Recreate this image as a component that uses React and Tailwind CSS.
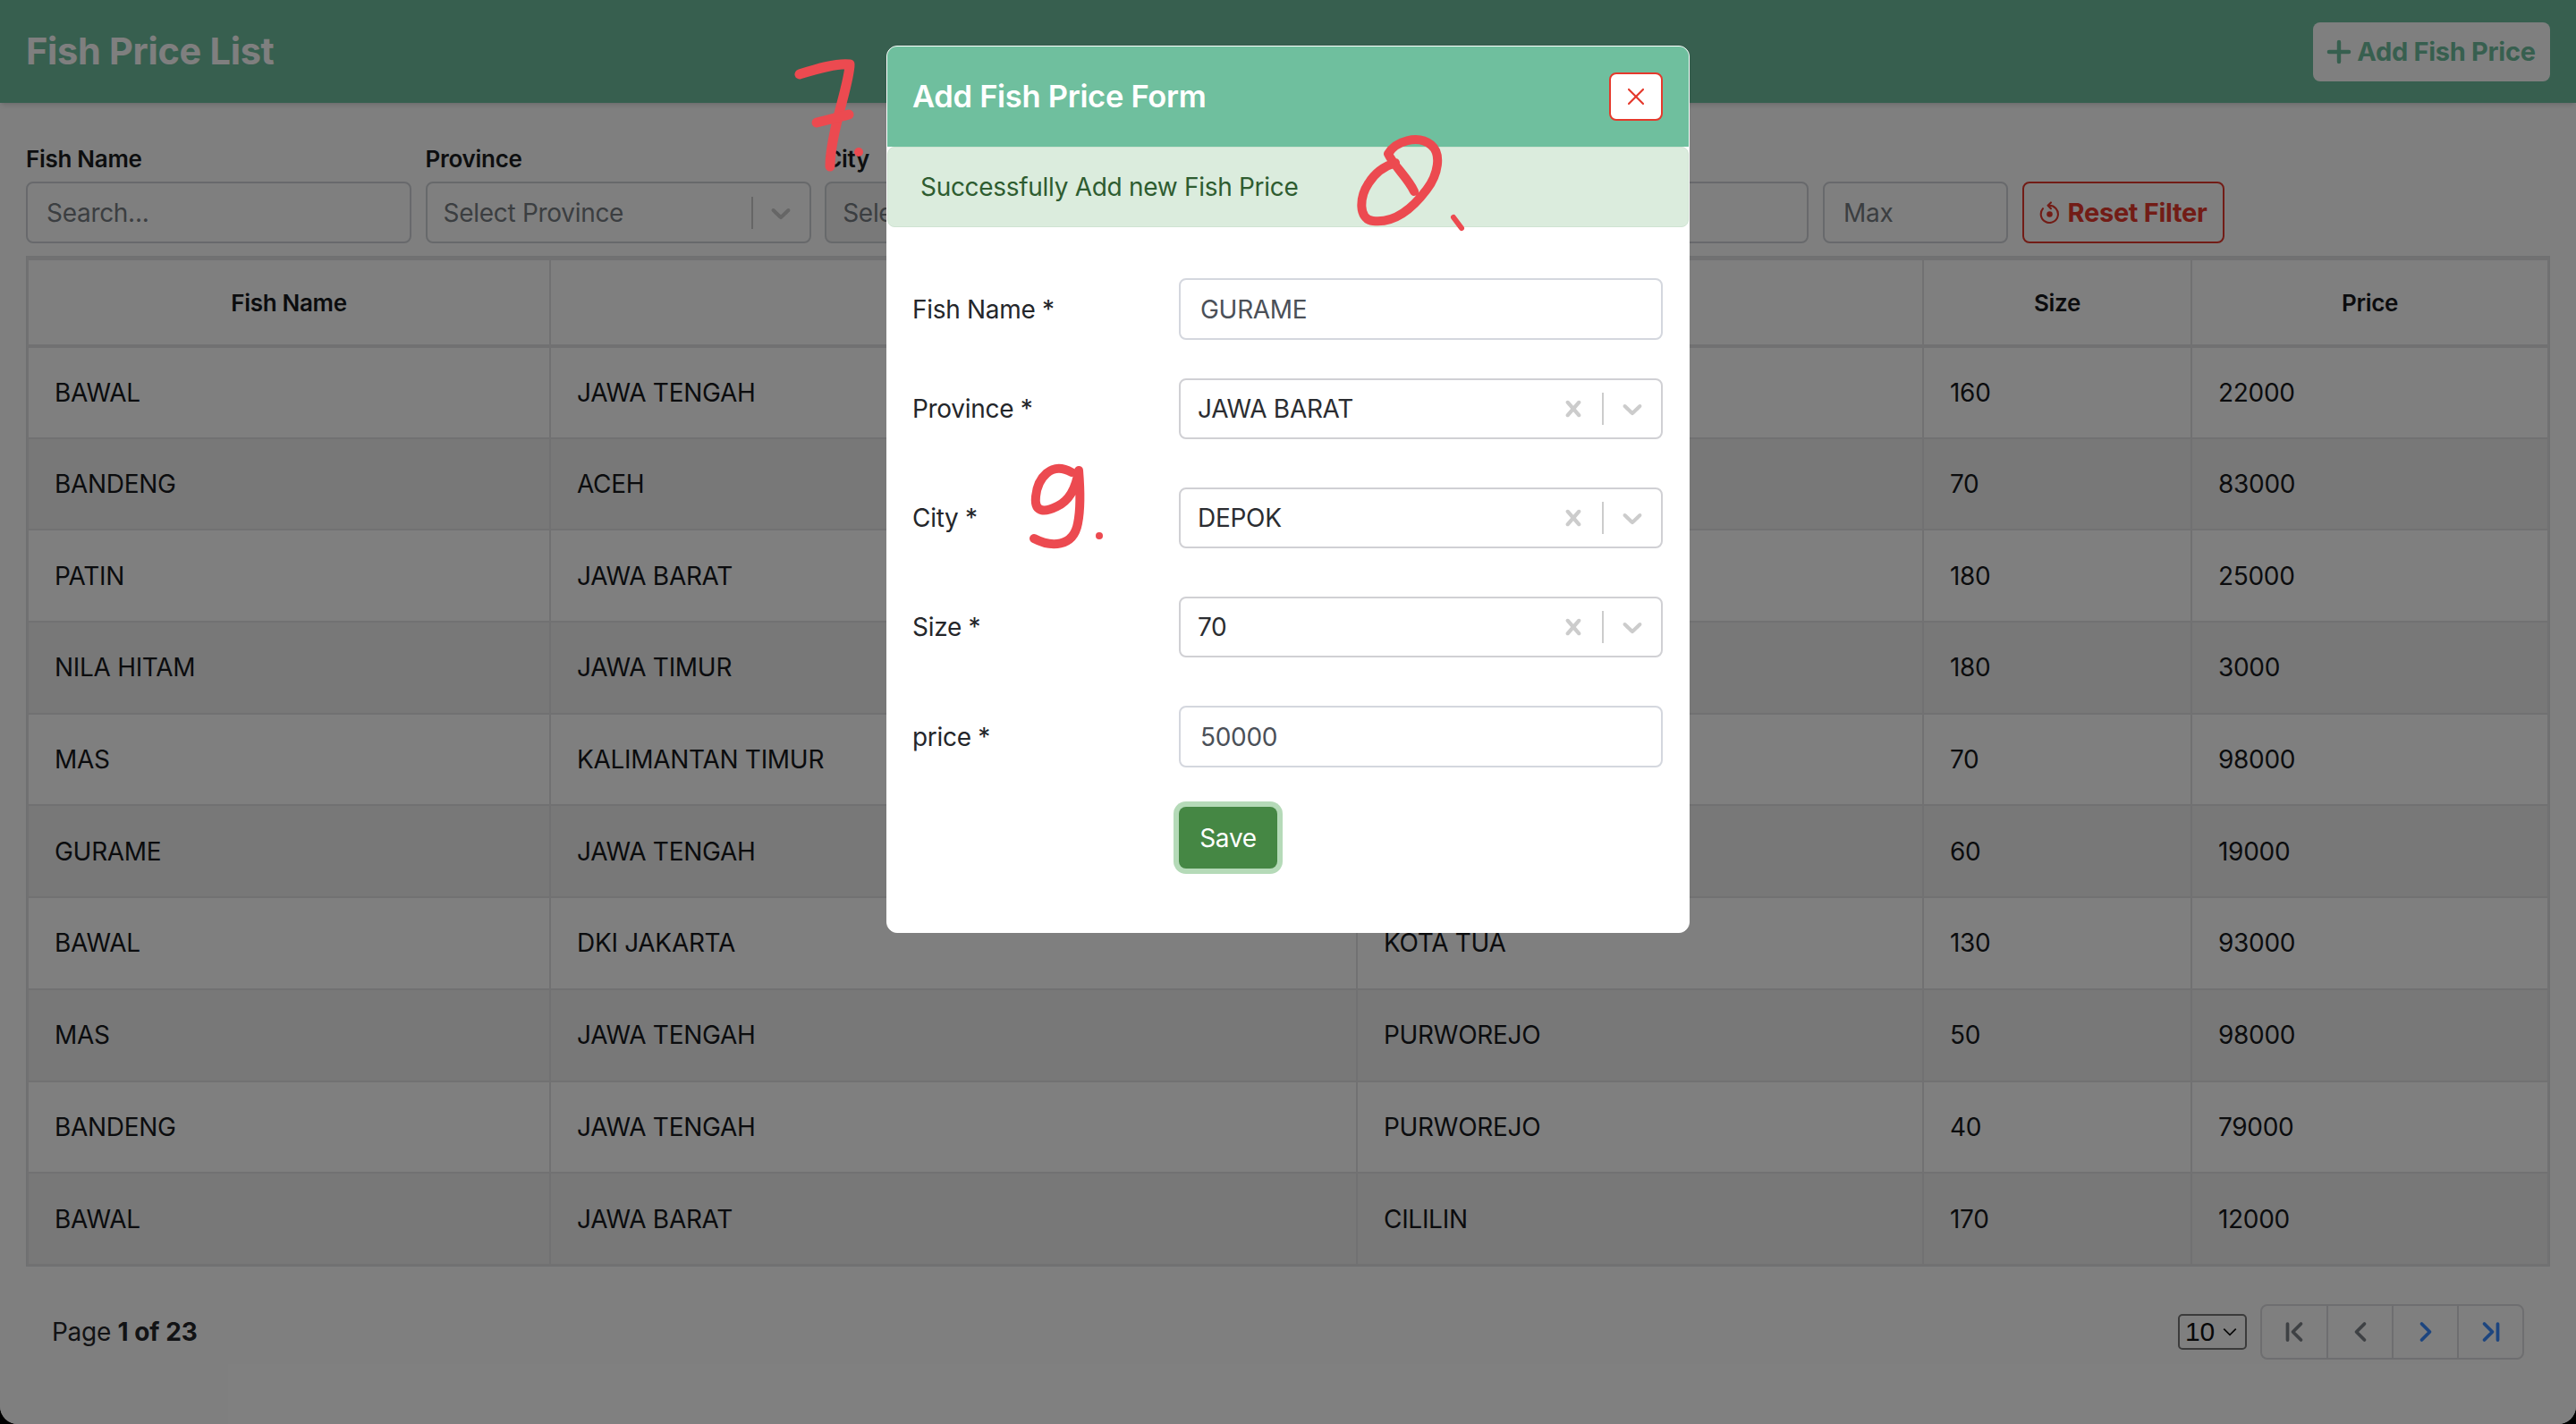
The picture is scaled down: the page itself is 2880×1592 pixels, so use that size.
import React from "react";
import { ChevronFirst, ChevronLast, ChevronLeft, ChevronRight, Plus, X } from "lucide-react";

const rows = [
  ["BAWAL", "JAWA TENGAH", "PURWOREJO", "160", "22000"],
  ["BANDENG", "ACEH", "BANDA ACEH", "70", "83000"],
  ["PATIN", "JAWA BARAT", "CILILIN", "180", "25000"],
  ["NILA HITAM", "JAWA TIMUR", "SURABAYA", "180", "3000"],
  ["MAS", "KALIMANTAN TIMUR", "BALIKPAPAN", "70", "98000"],
  ["GURAME", "JAWA TENGAH", "PURWOREJO", "60", "19000"],
  ["BAWAL", "DKI JAKARTA", "KOTA TUA", "130", "93000"],
  ["MAS", "JAWA TENGAH", "PURWOREJO", "50", "98000"],
  ["BANDENG", "JAWA TENGAH", "PURWOREJO", "40", "79000"],
  ["BAWAL", "JAWA BARAT", "CILILIN", "170", "12000"],
];

const Chevron = ({ className }) => (
  <svg viewBox="0 0 20 20" className={className} fill="currentColor">
    <path d="M4.516 7.548c0.436-0.446 1.043-0.481 1.576 0l3.908 3.747 3.908-3.747c0.533-0.481 1.141-0.446 1.576 0 0.436 0.445 0.408 1.197 0 1.615-0.406 0.418-4.695 4.502-4.695 4.502-0.217 0.223-0.502 0.335-0.789 0.335s-0.572-0.112-0.79-0.335c0 0-4.287-4.084-4.695-4.502s-0.436-1.17 0-1.615z" />
  </svg>
);

const Cross = ({ className }) => (
  <svg viewBox="0 0 20 20" className={className} fill="currentColor">
    <path d="M14.348 14.849c-0.469 0.469-1.229 0.469-1.697 0l-2.651-3.030-2.651 3.029c-0.469 0.469-1.229 0.469-1.697 0-0.469-0.469-0.469-1.229 0-1.697l2.758-3.15-2.759-3.152c-0.469-0.469-0.469-1.228 0-1.697s1.228-0.469 1.697 0l2.652 3.031 2.651-3.031c0.469-0.469 1.228-0.469 1.697 0s0.469 1.229 0 1.697l-2.758 3.152 2.758 3.15c0.469 0.469 0.469 1.229 0 1.698z" />
  </svg>
);

const ResetIcon = ({ className }) => (
  <svg viewBox="0 0 24 26" className={className} fill="none" stroke="currentColor" strokeWidth="2.2" strokeLinecap="round" strokeLinejoin="round">
    <path d="M11 5 A10 10 0 1 1 4.2 8.5" />
    <path d="M13.5 1.5 L10 5 L13.5 8.5" />
    <circle cx="12" cy="15" r="3.4" fill="currentColor" stroke="none" />
  </svg>
);

const FilterField = ({ label, className, children }) => (
  <div className={`flex flex-col ${className}`}>
    <label className="h-[26px] mb-[12px] text-[26px] leading-[26px] font-semibold text-[#1a1d21]">{label}</label>
    {children}
  </div>
);

const FilterSelect = ({ text, disabled }) => (
  <div className={`h-[69px] flex items-center rounded-lg border-2 border-[#cfd2d6] pl-[18px] pr-[14px] ${disabled ? "bg-[#f2f2f2]" : "bg-white"}`}>
    <span className="flex-1 text-[28px] text-[#777c82]">{text}</span>
    <span className="w-[2px] h-[36px] bg-[#cccccc]" />
    <Chevron className="w-[36px] h-[36px] ml-[13px] text-[#cccccc]" />
  </div>
);

const FormSelect = ({ value }) => (
  <div className="h-[68px] flex items-center rounded-lg border-2 border-[#d0d0d4] bg-white pl-[19px] pr-[14px]">
    <span className="flex-1 text-[28px] text-[#2b2d31]">{value}</span>
    <Cross className="w-[36px] h-[36px] text-[#cccccc]" />
    <span className="w-[2px] h-[36px] bg-[#cccccc] mx-[14px]" />
    <Chevron className="w-[36px] h-[36px] text-[#cccccc]" />
  </div>
);

const FormInput = ({ value }) => (
  <div className="h-[69px] flex items-center rounded-lg border-2 border-[#d4d7de] bg-white px-[22px] text-[28px] text-[#4b5058]">
    {value}
  </div>
);

const FormRow = ({ label, className, children }) => (
  <div className={`flex items-center ${className}`}>
    <label className="w-[298px] text-[28px] text-[#24262a]">{label}</label>
    <div className="w-[541px]">{children}</div>
  </div>
);

const Annotations = () => (
  <svg className="absolute inset-0 w-full h-full pointer-events-none" viewBox="0 0 2880 1592" fill="none" stroke="#ec4a50" strokeLinecap="round" strokeLinejoin="round">
    <path strokeWidth="11" d="M894 83 C910 78 935 70 950 72 C950 85 942 110 936 135 C930 160 928 172 928 186" />
    <path strokeWidth="11" d="M913 137 C925 134 938 131 949 128" />
    <circle cx="960" cy="170" r="5" fill="#ec4a50" stroke="none" />
    <path strokeWidth="10" d="M1552 172 C1560 158 1585 150 1600 162 C1612 172 1608 195 1595 212 C1580 232 1560 250 1535 247 C1518 245 1520 220 1530 205 C1538 192 1550 185 1560 182 M1552 172 C1558 185 1575 200 1581 214" />
    <path strokeWidth="6" d="M1625 243 L1634 255" />
    <path strokeWidth="10" d="M1198 528 C1175 515 1160 535 1158 555 C1156 575 1170 572 1182 566 C1195 560 1203 545 1206 526 C1208 550 1208 570 1205 585 C1200 612 1175 612 1156 602" />
    <circle cx="1229" cy="599" r="4" fill="#ec4a50" stroke="none" />
  </svg>
);

const App = () => {
  return (
    <div className="w-[2880px] h-[1592px] bg-black font-[Inter,sans-serif] tracking-[-0.3px] relative overflow-hidden">
      <div className="h-full bg-white rounded-b-[20px] overflow-hidden">
        <header className="h-[115px] bg-[#6fbf9e] flex items-center justify-between pl-[29px] pr-[29px] shadow-md">
          <h1 className="text-[41.5px] font-bold text-white">Fish Price List</h1>
          <button className="w-[265px] h-[66px] flex items-center justify-center gap-[1px] rounded-lg bg-white pr-[6px] text-[#6fbf9e] text-[29px] font-bold">
            <Plus className="w-[38px] h-[38px]" strokeWidth={2.8} />
            Add Fish Price
          </button>
        </header>

        <div className="px-[29px]">
          <div className="flex items-end gap-[15.6px] pt-[50px]">
            <FilterField label="Fish Name" className="w-[431px]">
              <div className="h-[69px] flex items-center rounded-lg border-2 border-[#d0d3d8] px-[21px] text-[28px] text-[#777c82]">Search...</div>
            </FilterField>
            <FilterField label="Province" className="w-[431px]">
              <FilterSelect text="Select Province" />
            </FilterField>
            <FilterField label="City" className="w-[431px]">
              <FilterSelect text="Select City" disabled />
            </FilterField>
            <FilterField label="Size" className="w-[431px]">
              <FilterSelect text="Select Size" />
            </FilterField>
            <FilterField label="Price" className="w-[207px]">
              <div className="h-[69px] flex items-center rounded-lg border-2 border-[#d0d3d8] px-[21px] text-[28px] text-[#777c82]">Min</div>
            </FilterField>
            <div className="w-[207px] h-[69px] flex items-center rounded-lg border-2 border-[#d0d3d8] px-[21px] text-[28px] text-[#777c82]">Max</div>
            <button className="w-[226px] h-[69px] flex items-center justify-center gap-[9px] rounded-lg border-2 border-[#e5392c] text-[#e5392c] text-[29px] font-bold">
              <ResetIcon className="w-[23px] h-[25px]" />
              Reset Filter
            </button>
          </div>

          <div className="mt-[14px] border border-[#dfe0e2]">
            <table className="w-full table-fixed border-collapse text-[28px] text-[#17191c]">
              <colgroup>
                <col className="w-[584px]" />
                <col className="w-[902px]" />
                <col className="w-[633px]" />
                <col className="w-[300px]" />
                <col />
              </colgroup>
              <thead>
                <tr className="h-[98px] border-t-4 border-b-4 border-[#e2e3e5]">
                  {["Fish Name", "Province", "City", "Size", "Price"].map((h) => (
                    <th key={h} className="border-x-2 border-[#e2e3e5] text-[26px] font-semibold text-center">{h}</th>
                  ))}
                </tr>
              </thead>
              <tbody>
                {rows.map((row, i) => (
                  <tr key={i} className={`h-[102.7px] border-b-2 border-[#e2e3e5] ${i % 2 === 1 ? "bg-[#f0f0f0]" : "bg-white"}`}>
                    {row.map((cell, j) => (
                      <td key={j} className="border-x-2 border-[#e2e3e5] px-[29px] font-normal">{cell}</td>
                    ))}
                  </tr>
                ))}
              </tbody>
            </table>
          </div>

          <div className="mt-[42px] px-[29px] flex items-center justify-between">
            <p className="text-[28px] text-[#24262a]">Page <span className="font-bold tracking-normal">1 of 23</span></p>
            <div className="flex items-center gap-[15px]">
              <div className="w-[77px] h-[40px] flex items-center justify-between rounded-[5px] border-2 border-[#777] pl-[6px] pr-[8px] text-[30px] font-[Liberation_Sans,sans-serif] text-[#111]">
                10
                <svg viewBox="0 0 16 16" className="w-[18px] h-[18px]" fill="none" stroke="currentColor" strokeWidth="1.5"><path d="M2 5l6 6 6-6" /></svg>
              </div>
              <div className="flex h-[62px] rounded-lg border-2 border-[#dcdde0]">
                <span className="w-[72px] flex items-center justify-center text-[#7d8288]"><ChevronFirst className="w-[36px] h-[36px]" strokeWidth={2.5} /></span>
                <span className="w-[73px] flex items-center justify-center border-l-2 border-[#dcdde0] text-[#7d8288]"><ChevronLeft className="w-[36px] h-[36px]" strokeWidth={2.5} /></span>
                <span className="w-[73px] flex items-center justify-center border-l-2 border-[#dcdde0] text-[#3a8aff]"><ChevronRight className="w-[36px] h-[36px]" strokeWidth={2.5} /></span>
                <span className="w-[73px] flex items-center justify-center border-l-2 border-[#dcdde0] text-[#3a8aff]"><ChevronLast className="w-[36px] h-[36px]" strokeWidth={2.5} /></span>
              </div>
            </div>
          </div>
        </div>
      </div>

      <div className="absolute inset-0 bg-black/50 flex justify-center pt-[51px] rounded-b-[20px]">
        <div className="w-[898px] h-[992px] bg-white rounded-xl overflow-hidden border border-white">
          <div className="h-[112px] bg-[#6fbf9e] flex items-center justify-between pl-[28px] pr-[29px]">
            <h2 className="text-[34.5px] font-semibold text-white">Add Fish Price Form</h2>
            <button className="w-[60px] h-[54px] flex items-center justify-center rounded-lg bg-white border-2 border-[#e5392c] text-[#e5392c]">
              <X className="w-[32px] h-[32px]" strokeWidth={1.6} />
            </button>
          </div>
          <div className="h-[90px] flex items-center rounded-lg bg-[#dbecdd] border border-[#cfe3d2] px-[36px] text-[28px] text-[#2e5c30]">
            Successfully Add new Fish Price
          </div>
          <div className="pt-[57px] pl-[28px]">
            <FormRow label="Fish Name *" className="mb-[43px]"><FormInput value="GURAME" /></FormRow>
            <FormRow label="Province *" className="mb-[54px]"><FormSelect value="JAWA BARAT" /></FormRow>
            <FormRow label="City *" className="mb-[54px]"><FormSelect value="DEPOK" /></FormRow>
            <FormRow label="Size *" className="mb-[54px]"><FormSelect value="70" /></FormRow>
            <FormRow label="price *" className="mb-[44px]"><FormInput value="50000" /></FormRow>
            <div className="pl-[298px]">
              <button className="w-[110px] h-[69px] rounded-lg bg-[#458744] text-white text-[28px] ring-[6px] ring-[#b5dab8]">Save</button>
            </div>
          </div>
        </div>
      </div>
      <Annotations />
    </div>
  );
};

export default App;
